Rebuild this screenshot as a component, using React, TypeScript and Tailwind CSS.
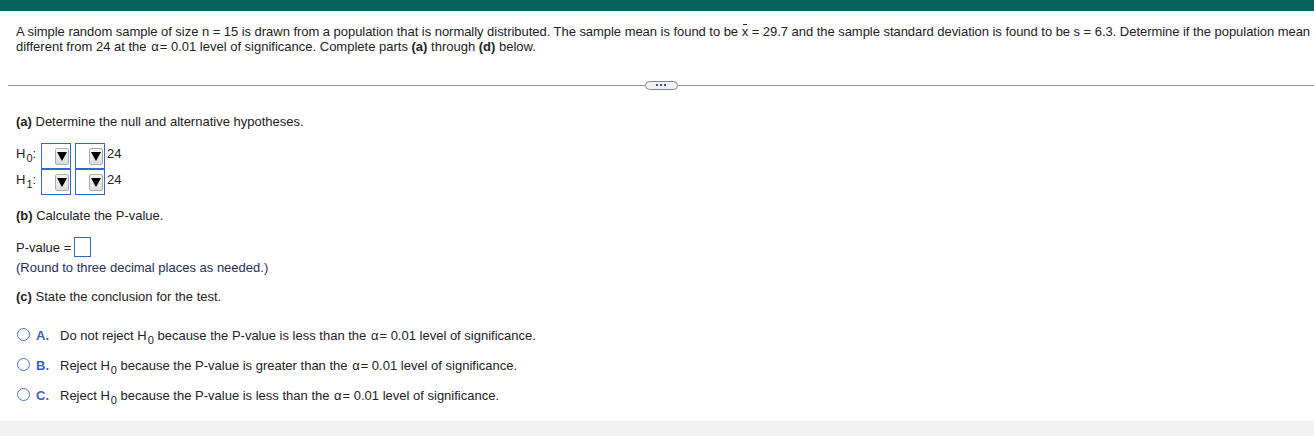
const font = { fontFamily: '"Liberation Sans", Arial, sans-serif' };

const Sub = ({ children }: { children: React.ReactNode }) => (
  <sub className="text-[11px] relative top-[4px] align-baseline ml-[1px]">{children}</sub>
);

const Alpha = () => <span className="mx-[1px]">α</span>;

const Caret = () => (
  <div className="w-[14px] h-[17px] rounded-[2px] border border-[#adadad] bg-gradient-to-b from-[#f6f6f6] to-[#dcdcdc] flex items-center justify-center">
    <svg width="10" height="10" viewBox="0 0 10 10">
      <polygon points="0,1 10,1 5,10" fill="#000" />
    </svg>
  </div>
);

const Dropdown = () => (
  <div className="w-[30px] h-[26px] border border-[#3566d0] flex items-center justify-end pr-[1px]">
    <Caret />
  </div>
);

const HypRow = ({ n }: { n: string }) => (
  <div className="flex h-[26px]">
    <div className="w-[25px] pt-[3px]">
      H<Sub>{n}</Sub>:
    </div>
    <Dropdown />
    <div className="w-[4px]" />
    <Dropdown />
    <div className="pl-[2px] pt-[3px]">24</div>
  </div>
);

const Option = ({ letter, children }: { letter: string; children: React.ReactNode }) => (
  <div className="flex items-center h-[15px]">
    <div className="w-[13px] h-[13px] rounded-full border-[1.5px] border-[#4a72d2] mt-[-3px] ml-[1px]" />
    <span className="ml-[6px] w-[24px] text-[#3d5fc4] font-bold">{letter}.</span>
    <span>{children}</span>
  </div>
);

export default function App() {
  return (
    <div
      className="h-[436px] w-[1314px] overflow-hidden bg-white flex flex-col text-[13px] leading-[15px] text-[#222]"
      style={font}
    >
      <div className="h-[11px] bg-[#04635a] shrink-0" />

      <div className="mt-[13px] pl-[16px] whitespace-nowrap">
        <div className="tracking-[-0.04px]">
          A simple random sample of size n = 15 is drawn from a population that is normally distributed. The sample
          mean is found to be{' '}
          <span className="relative inline-block">
            x
            <span className="absolute left-[1px] right-[1px] top-[0px] h-[1px] bg-[#222]" />
          </span>{' '}
          = 29.7 and the sample standard deviation is found to be s = 6.3. Determine if the population mean is
        </div>
        <div>
          different from 24 at the <Alpha />= 0.01 level of significance. Complete parts <b>(a)</b> through{' '}
          <b>(d)</b> below.
        </div>
      </div>

      <div className="mt-[26px] h-[10px] flex items-center pl-[8px]">
        <div className="flex-1 h-[1px] bg-[#8a9099]" />
        <div className="w-[33px] h-[9px] rounded-full border border-[#7d8590] bg-[#eef1f5] flex items-center justify-center gap-[2px]">
          <div className="w-[2px] h-[2px] bg-[#4a5260]" />
          <div className="w-[2px] h-[2px] bg-[#4a5260]" />
          <div className="w-[2px] h-[2px] bg-[#4a5260]" />
        </div>
        <div className="flex-1 h-[1px] bg-[#8a9099]" />
      </div>

      <div className="pl-[16px]">
        <div className="mt-[24px]">
          <b>(a)</b> Determine the null and alternative hypotheses.
        </div>
        <div className="mt-[14px]">
          <HypRow n="0" />
          <HypRow n="1" />
        </div>

        <div className="mt-[13px]">
          <b>(b)</b> Calculate the P-value.
        </div>
        <div className="mt-[14px] flex items-center h-[20px]">
          <span>P-value =</span>
          <div className="ml-[3px] w-[17px] h-[20px] border border-[#3566d0]" />
        </div>
        <div className="mt-[3px] text-[#263056]">(Round to three decimal places as needed.)</div>

        <div className="mt-[14px]">
          <b>(c)</b> State the conclusion for the test.
        </div>

        <div className="mt-[24px] flex flex-col gap-[15px]">
          <Option letter="A">
            Do not reject H<Sub>0</Sub> because the P-value is less than the <Alpha />= 0.01 level of significance.
          </Option>
          <Option letter="B">
            Reject H<Sub>0</Sub> because the P-value is greater than the <Alpha />= 0.01 level of significance.
          </Option>
          <Option letter="C">
            Reject H<Sub>0</Sub> because the P-value is less than the <Alpha />= 0.01 level of significance.
          </Option>
        </div>
      </div>

      <div className="mt-[18px] flex-1 bg-[#f0f0f0]" />
    </div>
  );
}
